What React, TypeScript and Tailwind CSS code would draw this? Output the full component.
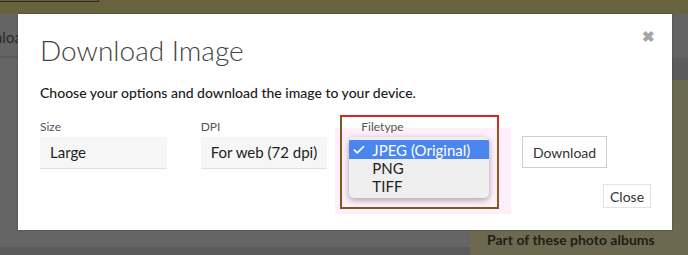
import { Check } from 'lucide-react'

const font = { fontFamily: 'Lato, "Open Sans", sans-serif' }

function Field({ label, value }: { label: string; value: string }) {
  return (
    <div className="flex w-[127px] flex-col">
      <span className="h-[20px] text-[12px] leading-[20px] text-[#555]">{label}</span>
      <div className="flex h-[32px] items-center border-b border-[#dedede] bg-[#f6f6f6] px-[10px] text-[15px] text-[#222]">
        {value}
      </div>
    </div>
  )
}

export default function App() {
  return (
    <div className="relative h-[255px] w-[688px] overflow-hidden bg-[#646464]" style={font}>
      {/* page behind the overlay */}
      <div className="relative h-[14px] w-full bg-[#67633f]">
        <div className="h-[2px] w-[99px] border-r border-b border-[#2e2c1c]" />
      </div>
      <div className="flex h-[241px] w-full">
        <div className="flex w-[470px] flex-col">
          <div className="h-[44px] border-b-2 border-[#5b5b5b] pt-[12px] text-[15px] text-[#2a2a2a]">
            <span className="-ml-[6px]">nload</span>
          </div>
          <div className="flex-1 bg-[#656565]" />
          <div className="h-[8px] bg-[#5a5a5a]" />
        </div>
        <div className="flex flex-1 flex-col">
          <div className="h-[44px] bg-[#636363]" />
          <div className="h-[22px] bg-[#5b5b5b]" />
          <div className="flex flex-1 items-end bg-[#6c6950] pb-[5px] pl-[17px]">
            <span className="text-[14px] font-bold text-[#1f1e17]">Part of these photo albums</span>
          </div>
        </div>
      </div>

      {/* modal */}
      <div className="absolute top-[14px] left-[18px] h-[216px] w-[654px] bg-white shadow-[0_0_2px_rgba(0,0,0,0.3)]">
        <div className="relative px-[22px] pt-[19px]">
          <span className="absolute top-[11px] right-[17px] text-[15px] font-black text-[#a5a5a5]">✖</span>
          <h1 className="text-[28px] leading-[34px] font-light text-[#444]">Download Image</h1>
          <p className="mt-[16px] text-[14px] font-medium leading-[20px] text-[#1a1a1a]">
            Choose your options and download the image to your device.
          </p>
          <div className="mt-[14px] flex items-start gap-[34px]">
            <Field label="Size" value="Large" />
            <Field label="DPI" value="For web (72 dpi)" />
            <div className="relative w-[127px]">
              {/* annotation */}
              <div className="absolute top-[11px] left-[-26px] h-[86px] w-[176px] bg-[#fde9f8]/70" />
              <div className="absolute top-[-2px] left-[-21px] h-[94px] w-[159px] border-2 border-t-[#e22222] border-r-[#8a5a1f] border-b-[#7a5a20] border-l-[#7a5a20]" />
              <div className="absolute top-[-2px] right-[-11px] h-[14px] w-[2px] bg-[#e22222]" />

              <span className="relative block h-[20px] text-[12px] leading-[20px] text-[#555]">Filetype</span>
              <div className="relative h-[32px] rounded-[4px] border border-[#a9a6ee] bg-[#e2f7f0]" />

              {/* native select popup */}
              <div className="absolute top-[20px] left-[-12px] w-[140px] overflow-hidden rounded-[5px] bg-[#efefef] py-[3px] text-[15px] leading-[18px] text-[#222] shadow-[0_2px_6px_rgba(0,0,0,0.35)]">
                <div className="flex h-[19px] items-center bg-[#4a85f0] pl-[3px] text-white">
                  <Check size={14} strokeWidth={3} className="mr-[6px]" />
                  JPEG (Original)
                </div>
                <div className="pl-[23px]">PNG</div>
                <div className="pl-[23px]">TIFF</div>
              </div>
            </div>
            <div className="flex flex-1 flex-col items-end">
              <button className="mt-[19px] mr-[43px] h-[32px] w-[85px] border border-[#cfcfcf] bg-white text-[14px] text-[#333]">
                Download
              </button>
              <button className="mt-[16px] -mr-[1px] h-[24px] w-[48px] border border-[#e2e2e2] bg-white text-[14px] text-[#333]">
                Close
              </button>
            </div>
          </div>
        </div>
      </div>
    </div>
  )
}
